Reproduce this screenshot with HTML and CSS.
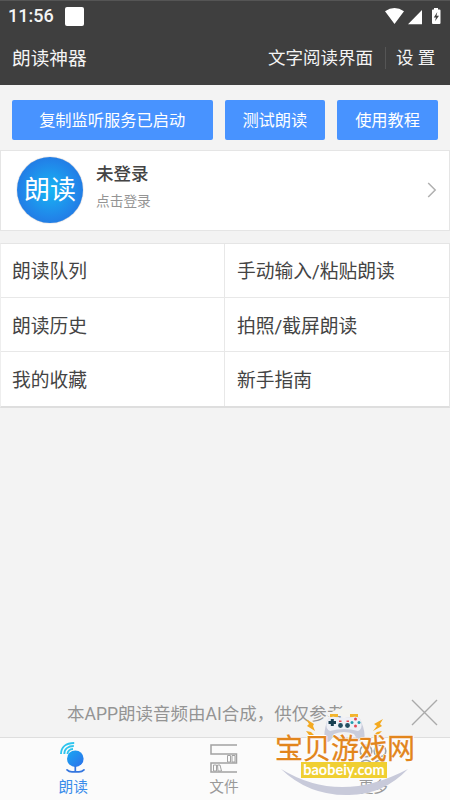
FILE: index.html
```html
<!DOCTYPE html>
<html lang="zh-CN">
<head>
<meta charset="utf-8">
<title>朗读神器</title>
<link rel="stylesheet" href="styles.css">
</head>
<body>
<div class="app">
  <header class="header">
    <div class="status">
      <span class="time">11:56</span><span class="notice"></span>
      <svg class="signals" width="58" height="18" viewBox="0 0 58 18">
        <path fill="#fff" d="M0 4.2Q9.5-2.4 19 4.2L9.5 17ZM23 17.2L37 3V17.2ZM47 3.5Q47 2.5 48 2.5H49V1H53V2.5H54.5Q55.5 2.5 55.5 3.5V16Q55.5 17 54.5 17H48Q47 17 47 16Z"/>
        <path fill="#3f3f3f" d="M52.3 5L48.8 10.4H51L50 14.2L54 8.8H51.5Z"/>
      </svg>
    </div>
    <div class="toolbar">
      <h1>朗读神器</h1>
      <span class="action">文字阅读界面</span>
      <span class="action settings">设 置</span>
    </div>
  </header>
  <div class="buttons">
    <button class="wide">复制监听服务已启动</button>
    <button>测试朗读</button>
    <button>使用教程</button>
  </div>
  <section class="profile">
    <div class="avatar">朗读</div>
    <div class="who"><strong>未登录</strong><span>点击登录</span></div>
    <svg width="10" height="16" viewBox="0 0 10 16" fill="none" stroke="#b0b0b0" stroke-width="1.5"><path d="M1.2 1L8.2 8L1.2 15"/></svg>
  </section>
  <nav class="grid">
    <span>朗读队列</span><span>手动输入/粘贴朗读</span>
    <span>朗读历史</span><span>拍照/截屏朗读</span>
    <span>我的收藏</span><span>新手指南</span>
  </nav>
  <main class="space"></main>
  <div class="tip">
    <span>本APP朗读音频由AI合成，供仅参考</span>
    <svg width="27" height="27" viewBox="0 0 27 27" stroke="#aaa" stroke-width="1.4"><path d="M1 1L26 26M26 1L1 26"/></svg>
  </div>
  <footer class="tabs">
    <div class="tab active">
      <svg width="32" height="34" viewBox="0 0 32 34" fill="none">
        <defs><linearGradient id="mic" x1="0" y1="0" x2="1" y2="1"><stop stop-color="#19a8f3"/><stop offset="1" stop-color="#2c6fea"/></linearGradient></defs>
        <path stroke="#2fc5ee" stroke-width="1.9" d="M4 13C4 6 9 2 17.2 2M7.3 13C7.3 8 11 5 16.8 5M10.5 13C10.5 10.5 12.5 8.2 16 8"/>
        <circle cx="18.3" cy="17.7" r="8.3" fill="url(#mic)"/>
        <path stroke="#3476df" stroke-width="1.7" d="M18.3 25V30.5"/>
        <path stroke="#3476df" stroke-width="1.7" stroke-linecap="round" d="M10 28.8Q12 30.8 15 30.8H22Q25 30.8 27 28.8"/>
      </svg>
      <span>朗读</span>
    </div>
    <div class="tab">
      <svg width="32" height="34" viewBox="0 0 32 34" fill="none" stroke="#a2a2a2" stroke-width="1.5">
        <path d="M29 4H3V13H28.5V22H3V31H29"/>
        <path stroke-width="1" d="M19.5 14.5H22.5V21H19.5ZM24 14.5H27V21H24ZM5.5 24H8.5V30H5.5ZM9.5 24L12 24L13.5 30H10Z"/>
      </svg>
      <span>文件</span>
    </div>
    <div class="tab">
      <svg width="32" height="34" viewBox="0 0 32 34" fill="none" stroke="#a2a2a2" stroke-width="1.6">
        <circle cx="9" cy="10" r="5.8"/><circle cx="23" cy="10" r="5.8"/><circle cx="9" cy="25" r="5.8"/><circle cx="23" cy="25" r="5.8"/>
      </svg>
      <span>更多</span>
    </div>
  </footer>
  <div class="watermark">
    <svg class="pad" width="146" height="94" viewBox="0 0 146 94">
      <path fill="#f4f4f0" d="M54 12Q68-3 88 12Z"/>
      <path fill="#c8cada" d="M8 65Q67 101 135 65Q110 91 76 91Q36 92 8 65Z"/>
      <g stroke="#f3b52c" stroke-width="3"><path d="M57 11.5H65M77 11.5H85"/></g>
      <path fill="#c9ccdb" d="M54 17Q57 12 62 13Q71 15 80 13Q86 12 88 17Q93 29 91 36Q87 41 81 30Q71 26 61 30Q56 42 52 36Q50 30 54 17Z"/>
      <path fill="#eef0f6" d="M54 17Q57 12 62 13Q71 15 80 13Q86 12 88 17Q90 25 85 27Q71 23 57 27Q52 25 54 17Z"/>
      <path stroke="#173f51" stroke-width="3" d="M55.5 18.5H63M59.3 15V22"/>
      <circle cx="67.5" cy="21.5" r="2.4" fill="#234e62"/><circle cx="74.5" cy="21.5" r="2.4" fill="#234e62"/>
      <g fill="#e54a56"><circle cx="82.5" cy="15" r="1.5"/><circle cx="82.5" cy="22" r="1.5"/><rect x="66" y="16.5" width="2.5" height="1.5"/><rect x="73.5" y="16.5" width="2.5" height="1.5"/></g>
      <g fill="#249daf"><circle cx="79" cy="18.5" r="1.5"/><circle cx="86" cy="18.5" r="1.5"/></g>
      <path fill="#f4aa20" d="M33 15L41 20L40 22L42 27L34 22L36 20ZM33 27L38 28L41 31L36 31ZM110 15L101 20L104 22L100 27L109 22L107 20ZM109 27L104 28L101 31L106 30Z"/>
    </svg>
    <b class="brand">宝贝游戏网</b>
    <span class="site">baobeiy.com</span>
  </div>
</div>
</body>
</html>
```
FILE: styles.css
```css
* { box-sizing: border-box; }
body { margin: 0; font-family: Roboto, "Noto Sans CJK SC", sans-serif; color: #444; }
.app { position: relative; width: 450px; height: 800px; display: flex; flex-direction: column; background: #f3f3f3; overflow: hidden; }
.header { height: 85px; background: #3f3f3f; color: #f4f4f4; flex: none; border-top: 1px solid #555; }
.status { height: 30px; padding: 0 7px 0 8px; display: flex; align-items: center; }
.time { font-size: 18px; line-height: 20px; font-weight: 500; width: 57px; }
.notice { width: 19px; height: 19px; border-radius: 2px; background: #fff; }
.signals { margin-left: auto; }
.toolbar { display: flex; align-items: center; height: 52px; padding: 0 15px 2px 12px; }
h1 { margin: 0 auto 0 0; font-size: 18.7px; font-weight: 400; }
.action { font-size: 17.5px; }
.settings { margin: 3px 0 0 12px; padding-left: 10px; border-left: 1px solid #555; line-height: 22px; width: 50px; white-space: nowrap; }
.buttons { display: flex; gap: 12px; padding: 15px 12px 0; height: 65px; flex: none; }
button { width: 101px; height: 40px; padding: 2px 0 0; border: 0; border-radius: 2px; background: #4893ff; color: #fff; font: 16.25px/38px Roboto, "Noto Sans CJK SC", sans-serif; }
.wide { width: 201px; }
.profile { height: 81px; flex: none; display: flex; align-items: center; background: #fff; border: 1px solid #e5e5e5; padding: 0 12px 2px 16px; }
.avatar { width: 66px; height: 66px; border-radius: 50%; background: radial-gradient(circle, #17b5f4 0, #2185e9 60%, #2369d9 100%); color: #fff; font-size: 26px; font-weight: 400; line-height: 66px; text-align: center; box-shadow: 0 0 1px #667; white-space: nowrap; }
.who { display: flex; flex-direction: column; margin: 0 auto 4px 13px; }
.who strong { font-size: 17.5px; line-height: 26px; font-weight: 500; }
.who span { font-size: 13.7px; line-height: 28px; color: #949494; }
.grid { display: grid; grid-template-columns: 224px 1fr; grid-template-rows: 54px 54px 54px; margin-top: 12px; border: 1px solid #e5e5e5; border-bottom: 2px solid #dedede; border-left-color: #eee; background: #fff; flex: none; }
.grid span { font-size: 18.75px; line-height: 54px; padding: 1px 0 0 11px; border-bottom: 1px solid #e8e8e8; height: 54px; }
.grid span:nth-child(n+3) { padding-top: 2px; }
.grid span:nth-child(even) { padding-left: 12px; }
.grid span:nth-child(odd) { border-right: 1px solid #e8e8e8; }
.grid span:nth-last-child(-n+2) { border-bottom: 0; }
.space { flex: 1; }
.tip { display: flex; align-items: center; justify-content: space-between; height: 50px; padding: 0 12px 0 67px; font-size: 17.5px; color: #949494; flex: none; }
.tabs { height: 63px; flex: none; display: grid; grid-template-columns: repeat(3, 1fr); background: #fbfbfb; border-top: 1px solid #dedede; padding: 0 2px 0 0; }
.tab { display: flex; flex-direction: column; align-items: center; padding-top: 3px; font-size: 14.7px; line-height: 24px; color: #999; }
.active { color: #3a8cea; padding-right: 3px; }
.watermark { position: absolute; left: 273px; top: 704px; width: 146px; height: 94px; }
.pad { position: absolute; left: 0; top: 0; }
.brand { position: absolute; left: 2px; top: 30px; font-size: 28px; line-height: 32px; font-weight: 400; color: #e2851c; white-space: nowrap; -webkit-text-stroke: .3px #e2851c; text-shadow: 1px 0 #fff, -1px 0 #fff, 0 1px #fff, 0 -1px #fff; }
.site { position: absolute; left: 28px; top: 58px; width: 86px; height: 16px; background: #f0cf32; color: #fff; font: 700 14.5px/15px Lato, sans-serif; text-align: center; }
```
